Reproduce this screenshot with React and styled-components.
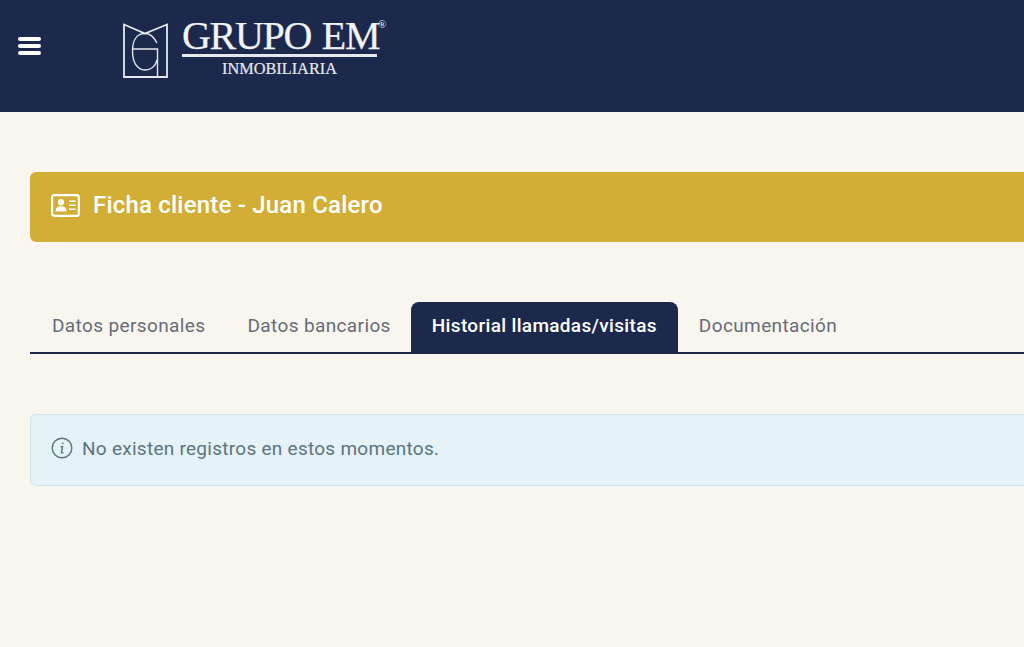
import React from 'react'
import styled, { createGlobalStyle } from 'styled-components'

const GlobalStyle = createGlobalStyle`
  html, body {
    margin: 0;
    padding: 0;
    background: #f9f6ef;
    overflow: hidden;
  }
  * {
    box-sizing: border-box;
  }
`

const tabs = ['Datos personales', 'Datos bancarios', 'Historial llamadas/visitas', 'Documentación']
const activeTab = 'Historial llamadas/visitas'

const LogoMark = () => (
  <MarkSvg viewBox="0 0 45 55" fill="none" stroke="#e6e8ee" strokeWidth="1.4">
    <path d="M1 1.5 L22 10.5 L44 1.5 V54 H1 Z" strokeWidth="1.8" />
    <path d="M34 20 C31 14 27 10.5 22 10.5 C14 10.5 9.5 17 9.5 28 C9.5 39 14 47 22 47 C28 47 32.5 43 34 37" />
    <path d="M9.5 26 H34.5 V54" />
  </MarkSvg>
)

const IdCardIcon = () => (
  <svg width="29" height="23" viewBox="0 0 29 23" fill="none" stroke="#fff" strokeWidth="2.2">
    <rect x="1.1" y="1.1" width="26.8" height="20.8" rx="2.5" />
    <circle cx="10" cy="8.2" r="3.1" fill="#fff" stroke="none" />
    <path d="M4.6 17.5 C4.6 13.4 7 12.3 10 12.3 C13 12.3 15.4 13.4 15.4 17.5 Z" fill="#fff" stroke="none" />
    <path d="M18 7.2 H24.5 M18 11.2 H24.5 M18 15.2 H24.5" strokeWidth="1.6" />
  </svg>
)

const InfoIcon = () => (
  <svg width="22" height="22" viewBox="0 0 22 22" fill="none" stroke="#5b7480" strokeWidth="1.4">
    <circle cx="11" cy="11" r="9.8" />
    <path d="M11.8 5.6 l-0.2 1.4" strokeWidth="1.8" />
    <path d="M9.6 9.8 H11.5 L10.4 15.8 H12.4" />
  </svg>
)

export default function App() {
  return (
    <>
      <GlobalStyle />
      <Header>
        <MenuButton aria-label="Menu">
          <span />
          <span />
          <span />
        </MenuButton>
        <Logo>
          <LogoMark />
          <LogoText>
            <LogoName>GRUPO EM<Registered>®</Registered></LogoName>
            <LogoSub>INMOBILIARIA</LogoSub>
          </LogoText>
        </Logo>
      </Header>
      <Main>
        <TitleBar>
          <IdCardIcon />
          <Title>Ficha cliente - Juan Calero</Title>
        </TitleBar>
        <TabList>
          {tabs.map(tab => (
            <Tab key={tab} $active={tab === activeTab}>{tab}</Tab>
          ))}
        </TabList>
        <Alert>
          <InfoIcon />
          <span>No existen registros en estos momentos.</span>
        </Alert>
      </Main>
    </>
  )
}

const Header = styled.header`
  display: flex;
  align-items: flex-start;
  height: 112px;
  background: #1c294c;
  padding: 37px 0 0 18px;
`

const MenuButton = styled.div`
  display: flex;
  flex-direction: column;
  gap: 3px;
  width: 23px;
  span {
    display: block;
    height: 4px;
    border-radius: 2px;
    background: #fff;
  }
`

const Logo = styled.div`
  display: flex;
  align-items: flex-start;
  margin: -20px 0 0 82px;
  gap: 14px;
`

const MarkSvg = styled.svg`
  width: 45px;
  height: 55px;
  margin-top: 6px;
`

const LogoText = styled.div`
  display: flex;
  flex-direction: column;
  align-items: center;
  width: 195px;
`

const LogoName = styled.div`
  position: relative;
  width: 100%;
  font-family: "Liberation Serif", serif;
  font-size: 40px;
  line-height: 37px;
  height: 40px;
  color: #f2f3f6;
  white-space: nowrap;
  border-bottom: 3px solid #e6e8ee;
  letter-spacing: -1.3px;
  word-spacing: 2px;
  -webkit-text-stroke: 0.25px #f2f3f6;
`

const Registered = styled.span`
  position: absolute;
  top: 1px;
  left: 196px;
  font-size: 11px;
  line-height: 12px;
  letter-spacing: 0;
  -webkit-text-stroke: 0;
`

const LogoSub = styled.div`
  font-family: "Liberation Serif", serif;
  font-size: 16.3px;
  line-height: 17px;
  margin-top: 3px;
  color: #e6e8ee;
  -webkit-text-stroke: 0.2px #e6e8ee;
`

const Main = styled.main`
  padding: 60px 0 0 30px;
  width: 1100px;
`

const TitleBar = styled.div`
  display: flex;
  align-items: center;
  height: 70px;
  padding: 0 0 4px 21px;
  gap: 13px;
  background: #d2ae36;
  border-radius: 6px;
`

const Title = styled.h1`
  margin: 0;
  font-family: Roboto, "Noto Sans", sans-serif;
  font-size: 24px;
  font-weight: 500;
  letter-spacing: 0.2px;
  color: #fff;
`

const TabList = styled.div`
  display: flex;
  margin-top: 60px;
  height: 52px;
  padding-left: 1px;
  border-bottom: 2px solid #1c294c;
`

const Tab = styled.div`
  display: flex;
  align-items: center;
  height: 50px;
  padding: 0 21px 3px;
  margin-left: ${props => (props.$active ? '-1px' : '0')};
  border-radius: 8px 8px 0 0;
  font-family: Roboto, "Noto Sans", sans-serif;
  font-size: 19px;
  letter-spacing: ${props => (props.$active ? '0.33px' : '0.38px')};
  font-weight: ${props => (props.$active ? 500 : 400)};
  color: ${props => (props.$active ? '#fff' : '#666c78')};
  background: ${props => (props.$active ? '#1c294c' : 'transparent')};
  white-space: nowrap;
`

const Alert = styled.div`
  display: flex;
  align-items: center;
  gap: 9px;
  height: 72px;
  margin-top: 60px;
  padding: 0 0 4px 20px;
  background: #e5f2f8;
  border: 1px solid #cfe3ea;
  border-radius: 6px;
  font-family: Roboto, "Noto Sans", sans-serif;
  font-size: 19px;
  letter-spacing: 0.27px;
  color: #5b7480;
`
